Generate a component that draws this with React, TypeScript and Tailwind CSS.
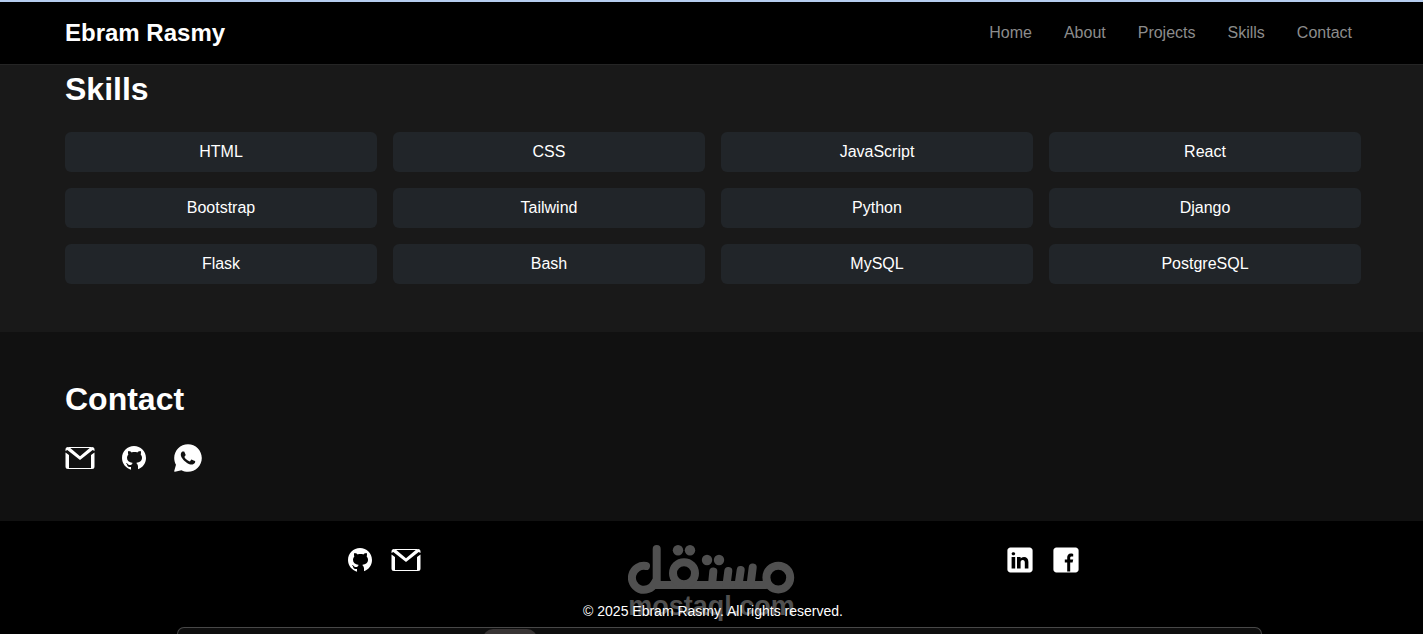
import { ReactNode } from "react";

const navLinks = ["Home", "About", "Projects", "Skills", "Contact"];

const skills = [
  "HTML",
  "CSS",
  "JavaScript",
  "React",
  "Bootstrap",
  "Tailwind",
  "Python",
  "Django",
  "Flask",
  "Bash",
  "MySQL",
  "PostgreSQL",
];

function MailIcon() {
  return (
    <svg className="size-[30px]" viewBox="0 0 30 30" fill="currentColor" aria-hidden="true">
      <path d="M4 4h22v1H4zM3 25h24v1H3z" />
      <path d="M.5 9.500 4 12v14H3a2.500 2.500 0 0 1-2.500-2.500z" />
      <path d="M29.500 9.500 26 12v14h1a2.500 2.500 0 0 0 2.500-2.500z" />
      <path d="M.5 8V6.500A2.500 2.500 0 0 1 3 4c.6 0 1.200.2 1.700.6L15 13.200 25.300 4.600C25.800 4.200 26.400 4 27 4a2.500 2.500 0 0 1 2.500 2.500V8l-1.800-1L15 17 2.300 7z" />
    </svg>
  );
}

function GithubIcon() {
  return (
    <svg className="size-[30px]" viewBox="0 0 30 30" fill="currentColor" aria-hidden="true">
      <path d="M15,3C8.373,3,3,8.373,3,15c0,5.623,3.872,10.328,9.092,11.63C12.036,26.468,12,26.28,12,26.047v-2.051c-0.487,0-1.303,0-1.508,0c-0.821,0-1.551-0.353-1.905-1.009c-0.393-0.729-0.461-1.844-1.435-2.526c-0.289-0.227-0.069-0.486,0.264-0.451c0.615,0.174,1.125,0.596,1.605,1.222c0.478,0.627,0.703,0.769,1.596,0.769c0.433,0,1.081-0.025,1.691-0.121c0.328-0.833,0.895-1.6,1.588-1.962c-3.996-0.411-5.903-2.399-5.903-5.098c0-1.162,0.495-2.286,1.336-3.233C9.053,10.647,8.706,8.73,9.435,8c1.798,0,2.885,1.166,3.146,1.481C13.477,9.174,14.461,9,15.495,9c1.036,0,2.024,0.174,2.922,0.483C18.675,9.17,19.763,8,21.565,8c0.732,0.731,0.381,2.656,0.102,3.594c0.836,0.945,1.328,2.066,1.328,3.226c0,2.697-1.904,4.684-5.894,5.097C18.199,20.49,19,22.1,19,23.313v2.734c0,0.104-0.023,0.179-0.035,0.268C23.641,24.676,27,20.236,27,15C27,8.373,21.627,3,15,3z" />
    </svg>
  );
}

function WhatsappIcon() {
  return (
    <svg className="size-[30px]" viewBox="0 0 50 50" fill="currentColor" aria-hidden="true">
      <path d="M25,2C12.318,2,2,12.318,2,25c0,3.96,1.023,7.854,2.963,11.29L2.037,46.73c-0.096,0.343-0.003,0.711,0.245,0.966C2.473,47.893,2.733,48,3,48c0.08,0,0.161-0.01,0.24-0.029l10.896-2.699C17.463,47.058,21.21,48,25,48c12.682,0,23-10.318,23-23S37.682,2,25,2z M36.57,33.116c-0.492,1.362-2.852,2.605-3.986,2.772c-1.018,0.149-2.306,0.213-3.72-0.231c-0.857-0.27-1.957-0.628-3.366-1.229c-5.923-2.526-9.791-8.415-10.087-8.804C15.116,25.235,13,22.463,13,19.594s1.525-4.28,2.067-4.864c0.542-0.584,1.181-0.73,1.575-0.73s0.787,0.005,1.132,0.021c0.363,0.018,0.85-0.137,1.329,1.001c0.492,1.168,1.673,4.037,1.819,4.33c0.148,0.292,0.246,0.633,0.05,1.022c-0.196,0.389-0.294,0.632-0.59,0.973s-0.62,0.76-0.886,1.022c-0.296,0.291-0.603,0.606-0.259,1.19c0.344,0.584,1.529,2.493,3.285,4.039c2.255,1.986,4.158,2.602,4.748,2.894c0.59,0.292,0.935,0.243,1.279-0.146c0.344-0.39,1.476-1.703,1.869-2.286s0.787-0.487,1.329-0.292c0.542,0.194,3.445,1.604,4.035,1.896c0.59,0.292,0.984,0.438,1.132,0.681C37.062,30.587,37.062,31.755,36.57,33.116z" />
    </svg>
  );
}

function LinkedinIcon() {
  return (
    <svg className="size-[30px]" viewBox="0 0 50 50" fill="currentColor" aria-hidden="true">
      <path d="M41,4H9C6.24,4,4,6.24,4,9v32c0,2.76,2.24,5,5,5h32c2.76,0,5-2.24,5-5V9C46,6.24,43.76,4,41,4z M17,20v19h-6V20H17z M11,14.47c0-1.4,1.2-2.47,3-2.47s2.93,1.07,3,2.47c0,1.4-1.12,2.53-3,2.53C12.2,17,11,15.87,11,14.47z M39,39h-6c0,0,0-9.26,0-10c0-2-1-4-3.5-4.04h-0.08C27,24.96,26,27.02,26,29c0,0.91,0,10,0,10h-6V20h6v2.56c0,0,1.93-2.56,5.81-2.56c3.97,0,7.19,2.73,7.19,8.26V39z" />
    </svg>
  );
}

function FacebookIcon() {
  return (
    <svg className="size-[30px]" viewBox="0 0 50 50" fill="currentColor" aria-hidden="true">
      <path d="M41,4H9C6.24,4,4,6.24,4,9v32c0,2.76,2.24,5,5,5h32c2.76,0,5-2.24,5-5V9C46,6.24,43.76,4,41,4z M37,19h-2c-2.14,0-3,0.5-3,2v3h5l-1,5h-4v15h-5V29h-4v-5h4v-3c0-4,2-7,6-7c2.9,0,4,1,4,1V19z" />
    </svg>
  );
}

function IconLink({ label, children }: { label: string; children: ReactNode }) {
  return (
    <a href="#" aria-label={label} className="block">
      {children}
    </a>
  );
}

function Watermark() {
  return (
    <div className="absolute inset-x-0 top-[23px] flex flex-col items-center text-[#505050]">
      <svg className="h-[50px] w-[168px]" viewBox="0 0 168 50" fill="none" stroke="currentColor" aria-hidden="true">
        <g strokeWidth="8" strokeLinecap="round">
          <path d="M28.700 5v33M18 22a12 12 0 1 0 8.500 17.500L29 41h109" />
          <path d="M85.300 27.500 84 41M100.300 27 98.500 41M112.700 26 110.500 41M124.700 23.500 122.500 41" />
          <circle cx="150.300" cy="33.600" r="11.900" />
          <circle cx="56" cy="29.200" r="11" />
        </g>
        <g fill="currentColor" stroke="none">
          <circle cx="50" cy="6.300" r="5.200" />
          <circle cx="62" cy="6.300" r="5.200" />
          <circle cx="79" cy="16" r="5.200" />
          <circle cx="91" cy="16" r="5.200" />
        </g>
      </svg>
      <span className="text-[27px] leading-6 font-bold">mostaql.com</span>
    </div>
  );
}

function Navbar() {
  return (
    <header className="border-t-2 border-b border-t-[#b5cdef] border-b-[#252525] bg-black">
      <nav className="flex h-[62px] items-center justify-between pr-[71px] pl-[65px]">
        <a href="#" className="text-2xl font-bold">
          Ebram Rasmy
        </a>
        <ul className="flex gap-8">
          {navLinks.map((link) => (
            <li key={link}>
              <a href={`#${link.toLowerCase()}`} className="text-[#8c8c8c]">
                {link}
              </a>
            </li>
          ))}
        </ul>
      </nav>
    </header>
  );
}

function Skills() {
  return (
    <section id="skills" className="bg-[#191919] pt-[5px] pr-[62px] pb-12 pl-[65px]">
      <h2 className="mb-6 text-[32px] leading-[38px] font-bold">Skills</h2>
      <ul className="grid grid-cols-4 gap-4">
        {skills.map((skill) => (
          <li key={skill} className="rounded-md bg-[#212529] p-2 text-center">
            {skill}
          </li>
        ))}
      </ul>
    </section>
  );
}

function Contact() {
  return (
    <section id="contact" className="bg-[#111111] pt-12 pr-[62px] pb-12 pl-[65px]">
      <h2 className="mb-[25px] text-[32px] leading-[38px] font-bold">Contact</h2>
      <div className="flex gap-6">
        <IconLink label="Email"><MailIcon /></IconLink>
        <IconLink label="GitHub"><GithubIcon /></IconLink>
        <IconLink label="WhatsApp"><WhatsappIcon /></IconLink>
      </div>
    </section>
  );
}

function Footer() {
  return (
    <footer className="relative bg-black pt-6">
      <Watermark />
      <div className="relative grid grid-cols-2 pr-[50px] pl-[53px]">
        <div className="flex justify-center gap-4">
          <IconLink label="GitHub"><GithubIcon /></IconLink>
          <IconLink label="Email"><MailIcon /></IconLink>
        </div>
        <div className="flex justify-center gap-4">
          <IconLink label="LinkedIn"><LinkedinIcon /></IconLink>
          <IconLink label="Facebook"><FacebookIcon /></IconLink>
        </div>
      </div>
      <p className="relative mt-[26px] mb-[5px] pr-[50px] pl-[53px] text-center text-sm leading-[21px]">
        © 2025 Ebram Rasmy. All rights reserved.
      </p>
      {/* top edge of the docked panel */}
      <div className="relative mr-[161px] ml-[177px] h-[7px] overflow-hidden rounded-t-lg border border-b-0 border-[#484848] bg-[#0e0e0e]">
        <div className="mt-px ml-[305px] h-5 w-[54px] rounded-full bg-[#383434]" />
      </div>
    </footer>
  );
}

export default function App() {
  return (
    <div className="bg-black font-['Liberation_Sans',Arial,sans-serif] text-base text-white">
      <Navbar />
      <Skills />
      <Contact />
      <Footer />
    </div>
  );
}
